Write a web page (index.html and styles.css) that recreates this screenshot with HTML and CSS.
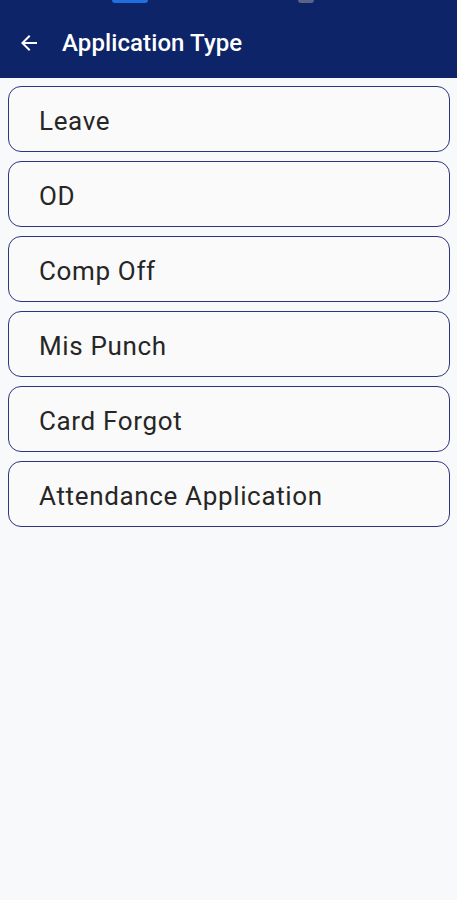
FILE: index.html
```html
<!DOCTYPE html>
<html lang="en">
<head>
  <meta charset="UTF-8">
  <meta name="viewport" content="width=device-width, initial-scale=1.0">
  <title>Application Type</title>
  <link rel="stylesheet" href="styles.css">
</head>
<body>
  <div class="appbar">
    <div class="status">
      <span class="dot blue"></span>
      <span class="dot grey"></span>
    </div>
    <div class="toolbar">
      <svg class="back" width="24" height="24" viewBox="0 0 24 24">
        <path d="M20 11H7.83l5.59-5.59L12 4l-8 8 8 8 1.41-1.41L7.83 13H20v-2z" fill="#fff"/>
      </svg>
      <span class="title">Application Type</span>
    </div>
  </div>

  <div class="list">
    <div class="item">Leave</div>
    <div class="item">OD</div>
    <div class="item">Comp Off</div>
    <div class="item">Mis Punch</div>
    <div class="item">Card Forgot</div>
    <div class="item">Attendance Application</div>
  </div>
</body>
</html>
```

FILE: styles.css
```css
body {
  margin: 0;
  background: #f8f9fa;
  font-family: Roboto, "Noto Sans", sans-serif;
  color: #222;
}
.appbar {
  background: #0d2468;
  height: 78px;
}
.status {
  height: 10px;
  position: relative;
}
.dot {
  position: absolute;
  top: 0;
  height: 3px;
  border-radius: 0 0 3px 3px;
}
.dot.blue {
  left: 112px;
  width: 36px;
  background: #1f6fe0;
}
.dot.grey {
  left: 298px;
  width: 16px;
  background: #5a6585;
}
.toolbar {
  display: flex;
  align-items: center;
  height: 66px;
  padding-left: 17px;
}
.back {
  margin-right: 21px;
}
.title {
  color: #fff;
  font-size: 24px;
  font-weight: 500;
  letter-spacing: 0.1px;
}
.list {
  display: flex;
  flex-direction: column;
  gap: 9px;
  padding: 8px 7px 0 8px;
}
.item {
  box-sizing: border-box;
  height: 66px;
  border: 1.5px solid #2b3580;
  border-radius: 13px;
  background: #fafafa;
  display: flex;
  align-items: center;
  padding: 3px 0 0 30px;
  font-size: 26px;
  letter-spacing: 0.65px;
  color: #262626;
}
```
